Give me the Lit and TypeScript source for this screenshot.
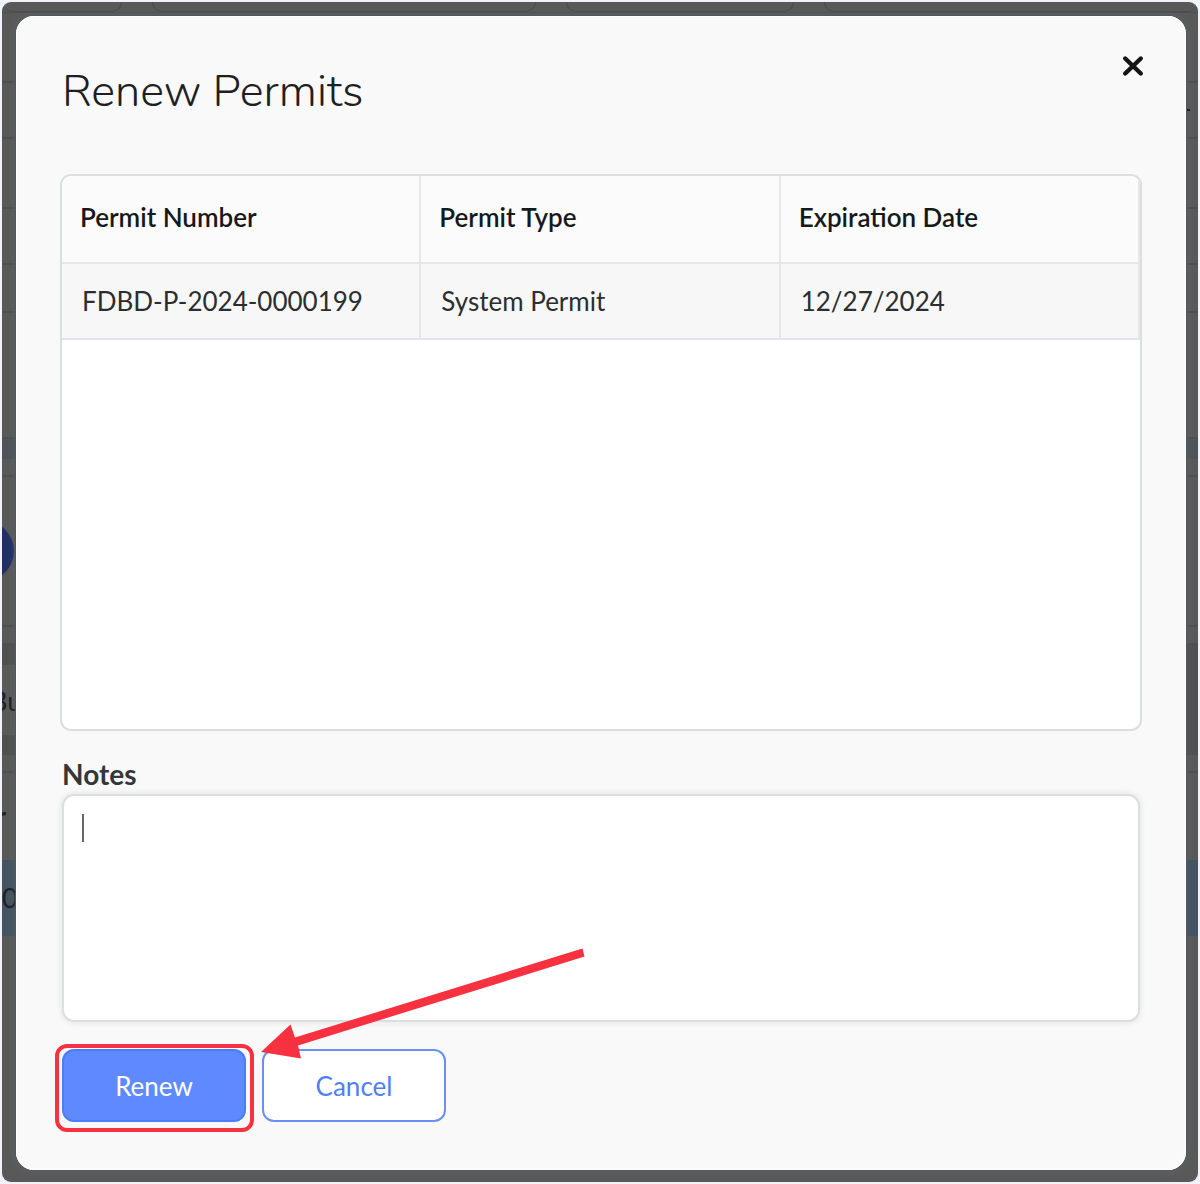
import { LitElement, html, css } from "lit";
import { customElement, property, query } from "lit/decorators.js";

interface Permit {
  number: string;
  type: string;
  expires: string;
}

/** The dimmed page that lies behind the dialog. */
@customElement("page-backdrop")
export class PageBackdrop extends LitElement {
  static styles = css`
    :host {
      display: flex;
      flex-direction: column;
      box-sizing: border-box;
      overflow: hidden;
      background: #595959;
      font: 400 27px/32px "Lato", "Open Sans", sans-serif;
      color: #1f2022;
    }
    .tabs {
      display: flex;
      height: 11px;
      gap: 30px;
      border-bottom: 1px solid #4d4f50;
      box-sizing: border-box;
      overflow: hidden;
      flex: none;
    }
    .tab {
      box-sizing: border-box;
      height: 10px;
      border: 1px solid #4b4c4d;
      border-top: 0;
      border-radius: 0 0 14px 14px;
    }
    .tab.first { width: 120px; border-left: 0; }
    .tab.wide { width: 384px; }
    .tab.mid { width: 228px; }
    .tab.rest { flex: 1; border-right: 0; }
    .row {
      box-sizing: border-box;
      flex: none;
      display: flex;
      align-items: center;
      border-bottom: 2px solid #4d4f50;
    }
    .h70 { height: 70px; }
    .h56 { height: 56px; }
    .h48 { height: 48px; }
    .h126 { height: 126px; }
    .h150 { height: 150px; }
    .h18 { height: 18px; }
    .band { flex: none; height: 20px; background: #50545a; }
    .menu { justify-content: flex-end; }
    .dash { width: 4px; height: 2px; margin-right: 8px; background: #151515; }
    .disc {
      width: 60px;
      height: 60px;
      flex: none;
      border-radius: 50%;
      background: #1f2f68;
      margin-left: -48px;
    }
    .strip {
      flex: none;
      height: 110px;
      padding: 20px 0;
      box-sizing: border-box;
      background: #505050;
    }
    .field {
      height: 70px;
      width: 50%;
      background: #5a5a5a;
      line-height: 72px;
      overflow: hidden;
    }
    .cut { display: block; text-indent: -12px; }
    .head {
      flex: none;
      height: 87px;
      box-sizing: border-box;
      line-height: 86px;
      font-weight: 700;
    }
    .head .cut { text-indent: -6px; }
    .selected { flex: none; height: 76px; background: #435462; line-height: 76px; }
    .selected .cut { text-indent: 0; }
  `;

  render() {
    return html`
      <div class="tabs">
        <span class="tab first"></span>
        <span class="tab wide"></span>
        <span class="tab mid"></span>
        <span class="tab rest"></span>
      </div>
      <div class="row h70"></div>
      <div class="row h56 menu"><span class="dash"></span></div>
      <div class="row h70"></div>
      <div class="row h56"></div>
      <div class="row h48"></div>
      <div class="row h126"></div>
      <div class="band"></div>
      <div class="row h18"></div>
      <div class="row h150"><span class="disc"></span></div>
      <div class="row h18"></div>
      <div class="strip"><div class="field"><span class="cut">Bu</span></div></div>
      <div class="row h18"></div>
      <div class="head"><span class="cut">r</span></div>
      <div class="selected"><span class="cut">0</span></div>
    `;
  }
}

@customElement("permit-table")
export class PermitTable extends LitElement {
  @property({ attribute: false }) permits: Permit[] = [];

  static styles = css`
    :host {
      display: block;
      box-sizing: border-box;
      min-height: 557px;
      overflow: hidden;
      background: #fff;
      border: 2px solid #dcdfdf;
      border-radius: 11px;
    }
    .table {
      width: 100%;
      table-layout: fixed;
      border-collapse: separate;
      border-spacing: 0;
      font-size: 26px;
      line-height: 32px;
      text-align: left;
    }
    .th {
      height: 88px;
      padding: 0 18px 4px;
      font-weight: 600;
      color: #16191b;
      background: #fbfbfb;
      border-bottom: 2px solid #e6e8e8;
      border-right: 2px solid #e6e8e8;
      box-sizing: border-box;
    }
    .td {
      height: 76px;
      padding: 0 20px;
      color: #2b2e30;
      background: #f7f7f7;
      border-bottom: 2px solid #dfe4ee;
      border-right: 2px solid #e6e8e8;
      box-sizing: border-box;
    }
  `;

  render() {
    return html`
      <table class="table">
        <thead>
          <tr>
            <th class="th" scope="col">Permit Number</th>
            <th class="th" scope="col">Permit Type</th>
            <th class="th" scope="col">Expiration Date</th>
          </tr>
        </thead>
        <tbody>
          ${this.permits.map(
            (p) => html`<tr>
              <td class="td">${p.number}</td>
              <td class="td">${p.type}</td>
              <td class="td">${p.expires}</td>
            </tr>`
          )}
        </tbody>
      </table>
    `;
  }
}

@customElement("app-root")
export class AppRoot extends LitElement {
  @query(".notes") notes!: HTMLTextAreaElement;

  private permits: Permit[] = [
    { number: "FDBD-P-2024-0000199", type: "System Permit", expires: "12/27/2024" },
  ];

  static styles = css`
    :host {
      display: block;
      box-sizing: border-box;
      min-height: 100vh;
      padding: 2px;
      background: #f1f2fa;
      font-family: "Lato", "Open Sans", sans-serif;
    }
    .screen {
      display: grid;
      grid-template-columns: minmax(0, 1fr);
      min-height: calc(100vh - 4px);
      border-radius: 9px;
      overflow: hidden;
    }
    .behind,
    .dialog {
      grid-area: 1 / 1;
    }
    .behind {
      height: 0;
      min-height: 100%;
    }
    .dialog {
      position: relative;
      box-sizing: border-box;
      display: flex;
      flex-direction: column;
      margin: 14px 12px 12px 14px;
      padding: 46px 44px 48px;
      background: #f9f9f9;
      border-radius: 18px;
      box-shadow: 0 0 0 1px #4f585c, 0 0 10px 1px rgba(110, 122, 130, 0.3), inset 0 0 0 1px #fff;
    }
    .top {
      display: flex;
      justify-content: space-between;
      align-items: flex-start;
      height: 112px;
    }
    .title {
      margin: 0;
      padding: 0 2px;
      font: 300 45px/60px "Nunito", "Lato", sans-serif;
      color: #1d1f20;
    }
    .close {
      width: 32px;
      height: 32px;
      margin-top: -12px;
      margin-right: -7px;
      padding: 5px;
      border: 0;
      background: none;
      cursor: pointer;
    }
    .close svg {
      display: block;
      width: 22px;
      height: 22px;
    }
    .form {
      display: flex;
      flex-direction: column;
      padding: 27px 2px 0;
    }
    .label {
      font-size: 28px;
      line-height: 32px;
      font-weight: 700;
      color: #34373a;
    }
    .box {
      position: relative;
      display: flex;
      margin-top: 4px;
    }
    .notes {
      flex: 1;
      min-width: 0;
      height: 228px;
      box-sizing: border-box;
      padding: 16px 18px;
      border: 2px solid #dcdfdf;
      border-radius: 12px;
      background: #fff;
      box-shadow: 0 0 6px rgba(120, 130, 130, 0.2);
      font: 400 26px/32px "Lato", "Open Sans", sans-serif;
      color: #2b2e30;
      caret-color: transparent;
      resize: none;
      outline: none;
    }
    .caret {
      position: absolute;
      left: 20px;
      top: 20px;
      width: 2px;
      height: 28px;
      background: #666;
    }
    .actions {
      position: relative;
      display: flex;
      gap: 16px;
      margin-top: 27px;
    }
    .btn {
      width: 184px;
      height: 73px;
      box-sizing: border-box;
      padding: 0;
      border: 2px solid #6a90f8;
      border-radius: 12px;
      font: 400 26px/32px "Lato", "Open Sans", sans-serif;
      cursor: pointer;
    }
    .primary {
      background: #5f8aff;
      border-color: #4a7dfb;
      color: #fff;
    }
    .plain {
      background: #fff;
      color: #4f7ef7;
    }
    .spot {
      position: relative;
      display: flex;
    }
    .spot::after {
      content: "";
      position: absolute;
      inset: -5px -8px -10px -7px;
      border: 4px solid #f73140;
      border-radius: 12px;
      pointer-events: none;
    }
    .arrow {
      position: absolute;
      left: 198px;
      top: -102px;
      width: 326px;
      height: 114px;
      pointer-events: none;
    }
  `;

  firstUpdated() {
    this.notes.focus();
  }

  render() {
    return html`
      <div class="screen">
        <page-backdrop class="behind" aria-hidden="true"></page-backdrop>
        <section class="dialog" role="dialog" aria-modal="true" aria-labelledby="title">
          <header class="top">
            <h1 class="title" id="title">Renew Permits</h1>
            <button class="close" type="button" aria-label="Close">
              <svg viewBox="0 0 22 22" aria-hidden="true">
                <path d="M3.200 3.500 18.800 18.500M18.800 3.500 3.200 18.500" stroke="#151515" stroke-width="4.4" fill="none" stroke-linecap="round" />
              </svg>
            </button>
          </header>
          <permit-table .permits=${this.permits}></permit-table>
          <form class="form" @submit=${(e: Event) => e.preventDefault()}>
            <label class="label" for="notes">Notes</label>
            <div class="box">
              <textarea class="notes" id="notes"></textarea>
              <span class="caret"></span>
            </div>
            <div class="actions">
              <span class="spot"><button class="btn primary" type="submit">Renew</button></span>
              <button class="btn plain" type="button">Cancel</button>
              <svg class="arrow" viewBox="0 0 326 114" aria-hidden="true">
                <path d="M322.500 1.500 324.500 9.500 38 98.500 41 111.500 1 105 30.500 77.500 35 90.500Z" fill="#f73140" />
              </svg>
            </div>
          </form>
        </section>
      </div>
    `;
  }
}
